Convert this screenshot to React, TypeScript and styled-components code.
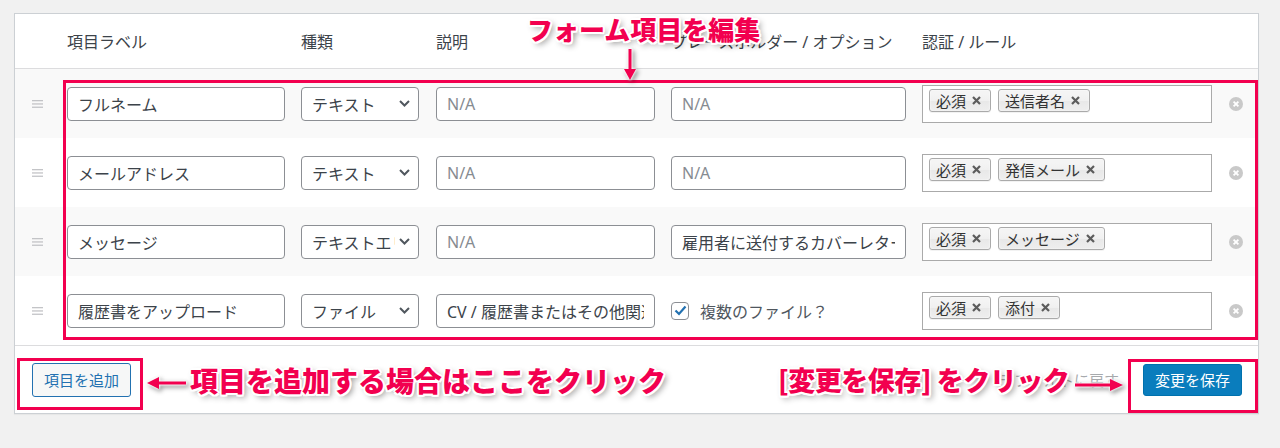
import React from "react";
import styled, { createGlobalStyle } from "styled-components";

const accent = "#f2004f";
const columns = "36px 218px 119px 219px 235px 290px 1fr";

const GlobalStyle = createGlobalStyle`
  html, body {
    margin: 0;
    padding: 0;
    background: #f1f1f1;
  }
  body {
    font-family: "Noto Sans", "Noto Sans CJK JP", sans-serif;
  }
  * {
    box-sizing: border-box;
  }
`;

const Page = styled.div`
  position: relative;
  width: 1280px;
  height: 448px;
  padding: 13px 21px 0 14px;
  background: #f1f1f1;
  overflow: hidden;
`;

const Panel = styled.div`
  background: #fff;
  border: 1px solid #ccd0d4;
  box-shadow: 0 1px 1px rgba(0, 0, 0, 0.04);
`;

const HeaderRow = styled.div`
  display: grid;
  grid-template-columns: ${columns};
  column-gap: 16px;
  align-items: center;
  height: 55px;
  border-bottom: 1px solid #dcdcde;
  font-size: 16px;
  color: #3c434a;
  white-space: nowrap;
`;

const FieldRow = styled.div<{ $striped: boolean }>`
  display: grid;
  grid-template-columns: ${columns};
  column-gap: 16px;
  align-items: center;
  height: 69px;
  background: ${(p) => (p.$striped ? "#f9f9f9" : "#fff")};
`;

const HandleCell = styled.div`
  display: flex;
  justify-content: flex-end;
  padding-right: 8px;
`;

const TextInput = styled.input`
  width: 100%;
  height: 34px;
  border: 1px solid #8c8f94;
  border-radius: 4px;
  padding: 0 10px;
  font-family: inherit;
  font-size: 16px;
  color: #3c434a;
  background: #fff;
  outline: none;

  &::placeholder {
    color: #868b91;
  }
`;

const SelectBox = styled.div`
  width: 118px;
  height: 34px;
  display: flex;
  align-items: center;
  gap: 4px;
  border: 1px solid #8c8f94;
  border-radius: 4px;
  padding: 0 8px 0 10px;
  background: #fff;
  font-size: 16px;
  color: #3c434a;
`;

const SelectText = styled.span`
  flex: 1;
  overflow: hidden;
  white-space: nowrap;
`;

const CheckRow = styled.label`
  display: flex;
  align-items: center;
  gap: 11px;
  font-size: 16px;
  color: #50575e;
`;

const CheckBox = styled.span`
  width: 18px;
  height: 18px;
  border: 1px solid #8c8f94;
  border-radius: 4px;
  background: #fff;
  display: flex;
  align-items: center;
  justify-content: center;
`;

const RulesBox = styled.div`
  height: 38px;
  border: 1px solid #aaa;
  background: #fff;
  display: flex;
  align-items: flex-start;
  gap: 7px;
  padding: 3px 6px;
`;

const Tag = styled.span`
  height: 23px;
  display: flex;
  align-items: center;
  gap: 6px;
  padding: 0 9px 0 6px;
  border: 1px solid #aaa;
  border-radius: 3px;
  background: linear-gradient(#f4f4f4 20%, #f0f0f0 50%, #e8e8e8 52%, #eee 100%);
  box-shadow: 0 0 2px #fff inset, 0 1px 0 rgba(0, 0, 0, 0.05);
  font-size: 15px;
  color: #333;
  white-space: nowrap;
`;

const RemoveCell = styled.div`
  display: flex;
  padding-left: 1px;
`;

const Footer = styled.div`
  display: flex;
  justify-content: space-between;
  align-items: center;
  height: 68px;
  padding: 0 16px 0 17px;
  border-top: 1px solid #dcdcde;
`;

const AddButton = styled.button`
  height: 34px;
  padding: 0 11px;
  border: 1px solid #2271b1;
  border-radius: 3px;
  background: #f6f7f7;
  color: #2271b1;
  font-family: inherit;
  font-size: 15px;
`;

const RightActions = styled.div`
  display: flex;
  align-items: center;
  gap: 24px;
`;

const ResetLink = styled.span`
  font-size: 15px;
  color: #a7aaad;
`;

const SaveButton = styled.button`
  height: 32px;
  padding: 0 11px;
  border: 1px solid #0071ad;
  border-radius: 3px;
  background: #0a7dbd;
  color: #fff;
  font-family: inherit;
  font-size: 15px;
`;

/* annotations drawn over the screenshot */

const Callout = styled.div<{ $left: number; $top: number; $size: number; $tight?: boolean }>`
  position: absolute;
  left: ${(p) => p.$left}px;
  top: ${(p) => p.$top}px;
  font-family: "Noto Sans CJK JP", sans-serif;
  font-size: ${(p) => p.$size}px;
  font-weight: 900;
  line-height: 1;
  letter-spacing: ${(p) => (p.$tight ? "-0.5px" : "0")};
  color: ${accent};
  white-space: nowrap;
  text-shadow: 2px 0 0 #fff, -2px 0 0 #fff, 0 2px 0 #fff, 0 -2px 0 #fff,
    1.5px 1.5px 0 #fff, -1.5px -1.5px 0 #fff, 1.5px -1.5px 0 #fff,
    -1.5px 1.5px 0 #fff, 3px 3px 6px rgba(0, 0, 0, 0.45);
`;

const Frame = styled.div<{ $left: number; $top: number; $w: number; $h: number }>`
  position: absolute;
  left: ${(p) => p.$left}px;
  top: ${(p) => p.$top}px;
  width: ${(p) => p.$w}px;
  height: ${(p) => p.$h}px;
  border: 3px solid ${accent};
  pointer-events: none;
`;

const ArrowSvg = styled.svg<{ $left: number; $top: number }>`
  position: absolute;
  left: ${(p) => p.$left}px;
  top: ${(p) => p.$top}px;
  overflow: visible;
  filter: drop-shadow(0 0 1px #fff) drop-shadow(0 0 1px #fff)
    drop-shadow(2px 2px 2px rgba(0, 0, 0, 0.4));
`;

const DragHandle = () => (
  <svg width="11" height="8" viewBox="0 0 11 8">
    <rect x="0" y="0" width="11" height="1.3" fill="#c3c4c7" />
    <rect x="0" y="3.3" width="11" height="1.3" fill="#c3c4c7" />
    <rect x="0" y="6.6" width="11" height="1.3" fill="#c3c4c7" />
  </svg>
);

const Chevron = () => (
  <svg width="11" height="7" viewBox="0 0 11 7">
    <path d="M1 1 L5.5 5.5 L10 1" stroke="#50575e" strokeWidth="2" fill="none" />
  </svg>
);

const TagClose = () => (
  <svg width="9" height="9" viewBox="0 0 9 9">
    <path d="M1 1 L8 8 M8 1 L1 8" stroke="#5c5c5c" strokeWidth="2.2" />
  </svg>
);

const RemoveIcon = () => (
  <svg width="14" height="14" viewBox="0 0 14 14">
    <circle cx="7" cy="7" r="7" fill="#c9c9c9" />
    <path d="M4.6 4.6 L9.4 9.4 M9.4 4.6 L4.6 9.4" stroke="#fff" strokeWidth="1.8" />
  </svg>
);

const CheckMark = () => (
  <svg width="13" height="11" viewBox="0 0 13 11">
    <path d="M1.5 5.5 L5 9 L11.5 1.5" stroke="#2271b1" strokeWidth="2.2" fill="none" />
  </svg>
);

interface Field {
  label: string;
  type: string;
  desc: string;
  placeholder: string;
  multiple?: boolean;
  rules: string[];
}

const fields: Field[] = [
  { label: "フルネーム", type: "テキスト", desc: "", placeholder: "", rules: ["必須", "送信者名"] },
  { label: "メールアドレス", type: "テキスト", desc: "", placeholder: "", rules: ["必須", "発信メール"] },
  {
    label: "メッセージ",
    type: "テキストエリア",
    desc: "",
    placeholder: "雇用者に送付するカバーレター",
    rules: ["必須", "メッセージ"],
  },
  {
    label: "履歴書をアップロード",
    type: "ファイル",
    desc: "CV / 履歴書またはその他関連書類",
    placeholder: "",
    multiple: true,
    rules: ["必須", "添付"],
  },
];

export default function App() {
  return (
    <>
      <GlobalStyle />
      <Page>
        <Panel>
          <HeaderRow>
            <span />
            <span>項目ラベル</span>
            <span>種類</span>
            <span>説明</span>
            <span>プレースホルダー / オプション</span>
            <span>認証 / ルール</span>
            <span />
          </HeaderRow>
          {fields.map((f, i) => (
            <FieldRow key={f.label} $striped={i % 2 === 0}>
              <HandleCell>
                <DragHandle />
              </HandleCell>
              <TextInput defaultValue={f.label} />
              <SelectBox>
                <SelectText>{f.type}</SelectText>
                <Chevron />
              </SelectBox>
              <TextInput defaultValue={f.desc} placeholder="N/A" />
              {f.multiple ? (
                <CheckRow>
                  <CheckBox>
                    <CheckMark />
                  </CheckBox>
                  複数のファイル？
                </CheckRow>
              ) : (
                <TextInput defaultValue={f.placeholder} placeholder="N/A" />
              )}
              <RulesBox>
                {f.rules.map((r) => (
                  <Tag key={r}>
                    {r}
                    <TagClose />
                  </Tag>
                ))}
              </RulesBox>
              <RemoveCell>
                <RemoveIcon />
              </RemoveCell>
            </FieldRow>
          ))}
          <Footer>
            <AddButton>項目を追加</AddButton>
            <RightActions>
              <ResetLink>デフォルトに戻す</ResetLink>
              <SaveButton>変更を保存</SaveButton>
            </RightActions>
          </Footer>
        </Panel>

        <Frame $left={63} $top={80} $w={1195} $h={260} />
        <Frame $left={17} $top={358} $w={126} $h={52} />
        <Frame $left={1128} $top={359} $w={130} $h={54} />

        <Callout $left={527} $top={16} $size={26}>
          フォーム項目を編集
        </Callout>
        <ArrowSvg $left={623} $top={49} width="14" height="31" viewBox="0 0 14 31">
          <rect x="5.5" y="0" width="3" height="22" fill={accent} />
          <path d="M1 20 L13 20 L7 31 Z" fill={accent} />
        </ArrowSvg>

        <Callout $left={190} $top={366} $size={28}>
          項目を追加する場合はここをクリック
        </Callout>
        <ArrowSvg $left={147} $top={376} width="39" height="14" viewBox="0 0 39 14">
          <rect x="10" y="5.5" width="29" height="3" fill={accent} />
          <path d="M0 7 L12 1 L12 13 Z" fill={accent} />
        </ArrowSvg>

        <Callout $left={778} $top={366} $size={27} $tight>
          [変更を保存] をクリック
        </Callout>
        <ArrowSvg $left={1075} $top={378} width="48" height="14" viewBox="0 0 48 14">
          <rect x="0" y="5.5" width="37" height="3" fill={accent} />
          <path d="M48 7 L35 1 L35 13 Z" fill={accent} />
        </ArrowSvg>
      </Page>
    </>
  );
}
